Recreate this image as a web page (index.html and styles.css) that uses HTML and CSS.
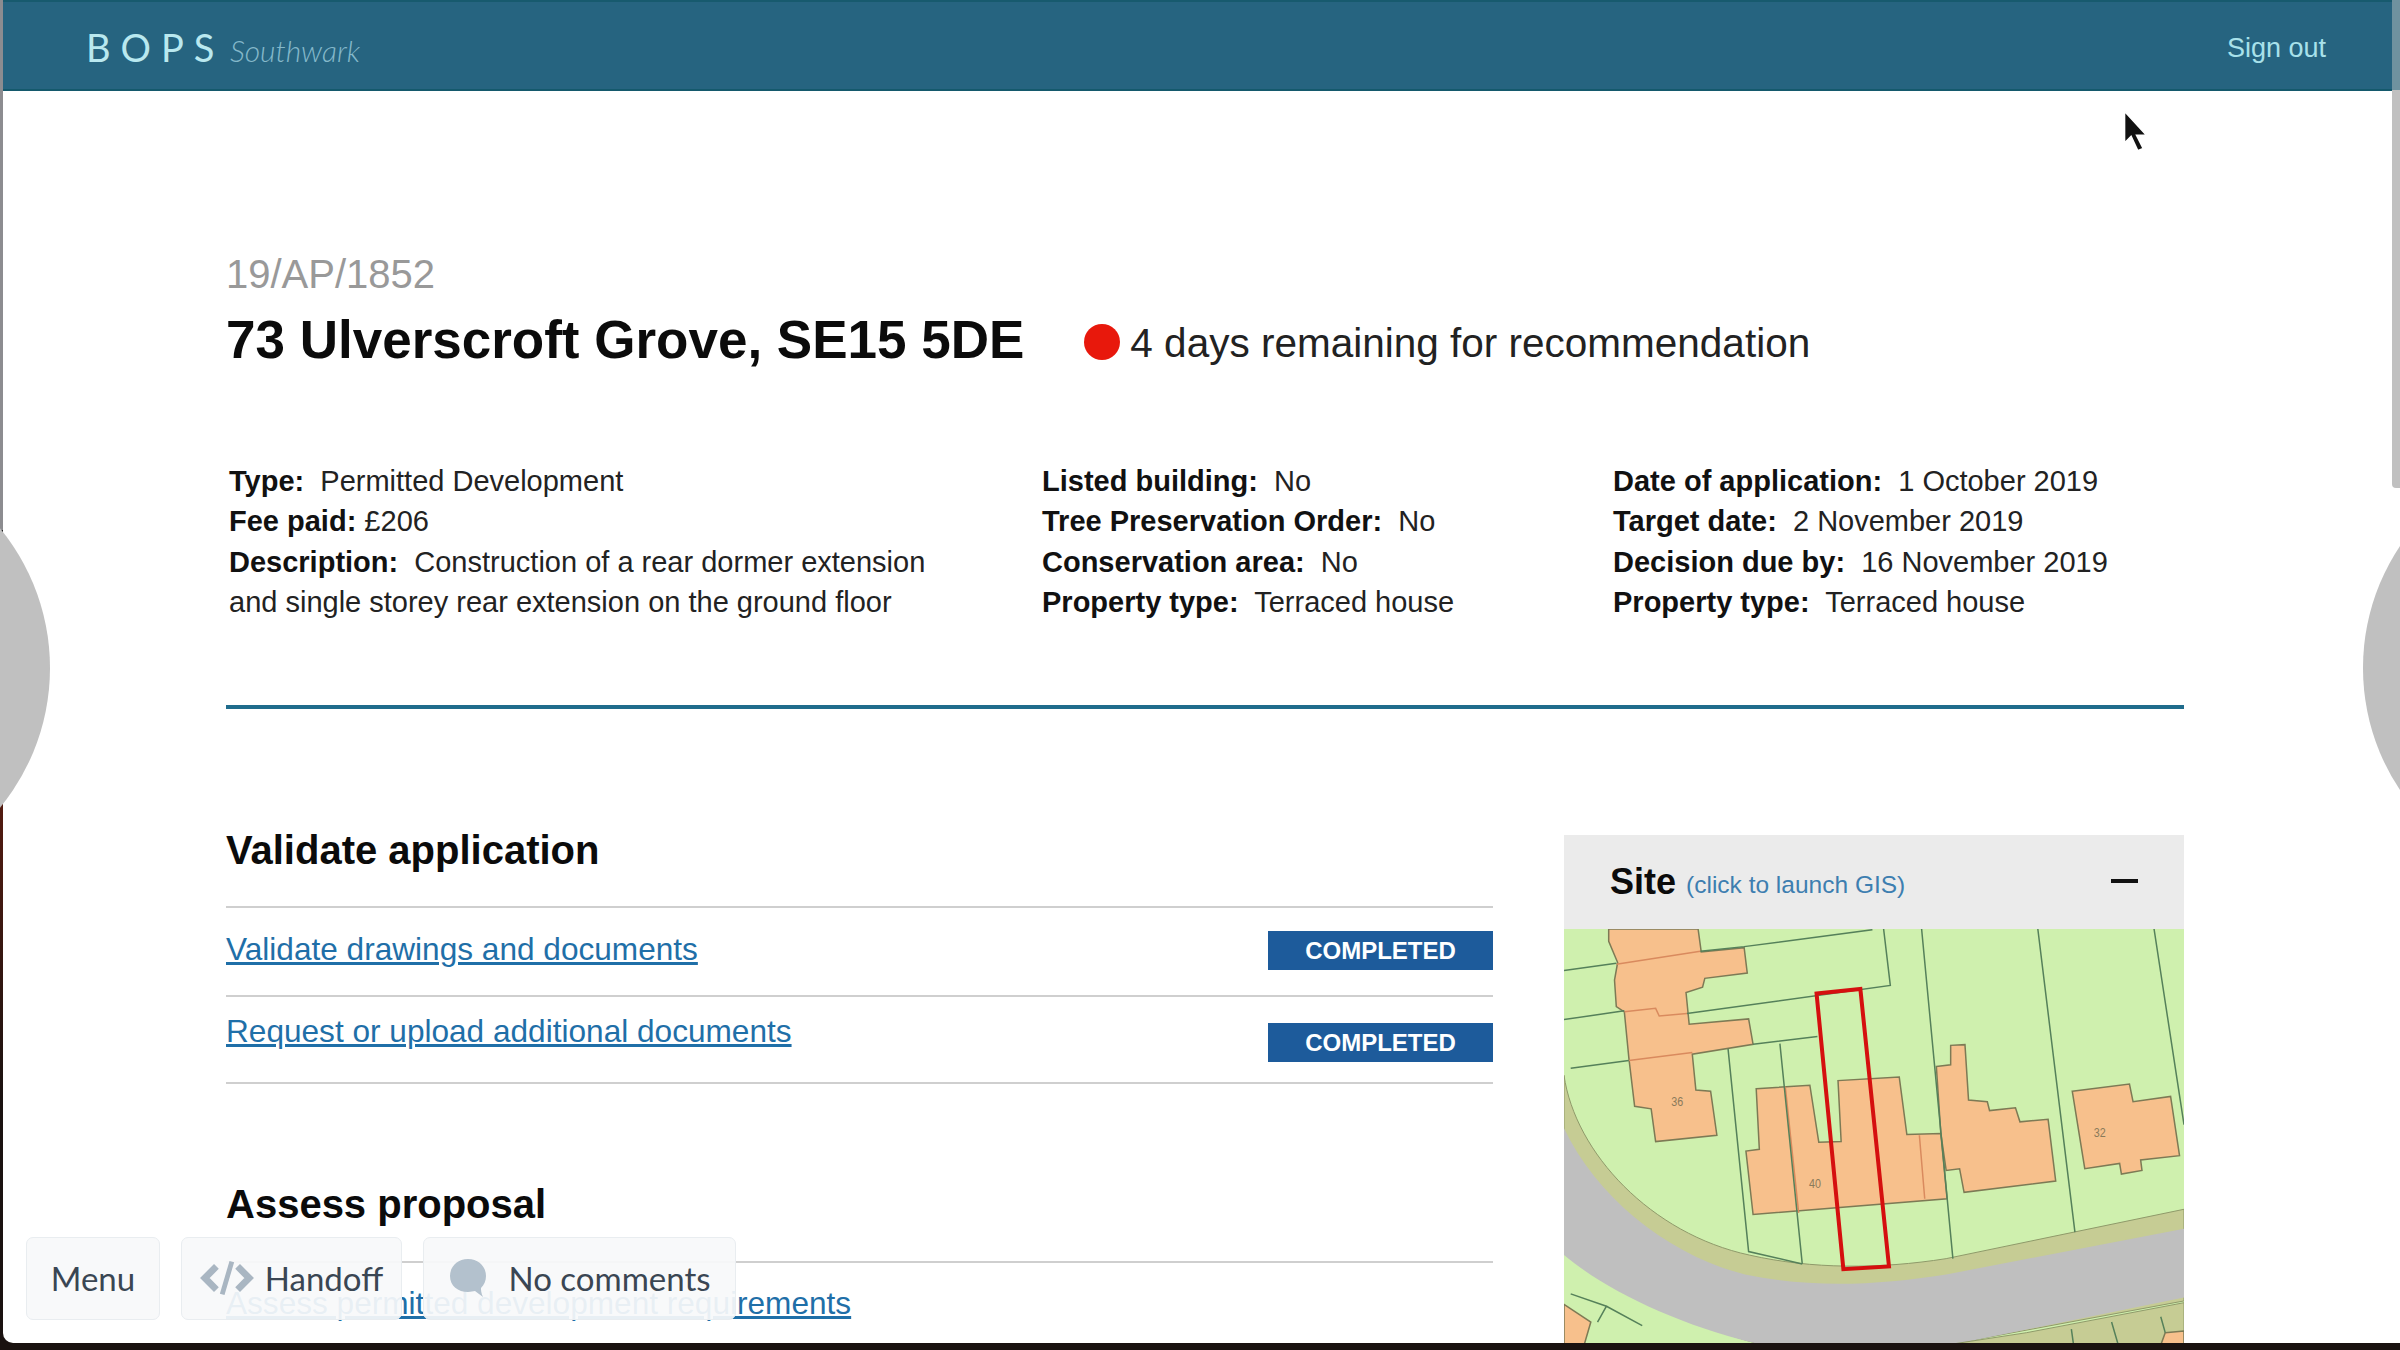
FILE: index.html
```html
<!DOCTYPE html>
<html lang="en">
<head>
  <meta charset="UTF-8" />
  <title>BOPS Southwark</title>
  <link rel="stylesheet" href="styles.css">
</head>
<body>
  <div class="screen">
    <div class="window">
      <header class="topbar">
        <div class="brand"><span class="brand-name">BOPS</span> <span class="brand-area">Southwark</span></div>
        <a class="signout">Sign out</a>
      </header>

      <main class="page">
        <p class="reference">19/AP/1852</p>
        <div class="title-row">
          <h1>73 Ulverscroft Grove, SE15 5DE</h1>
          <span class="dot"></span>
          <span class="remaining">4 days remaining for recommendation</span>
        </div>

        <div class="details">
          <div class="col-one">
            <div><b>Type:</b>&nbsp; Permitted Development</div>
            <div><b>Fee paid:</b> £206</div>
            <div><b>Description:</b>&nbsp; Construction of a rear dormer extension</div>
            <div>and single storey rear extension on the ground floor</div>
          </div>
          <div class="col-two">
            <div><b>Listed building:</b>&nbsp; No</div>
            <div><b>Tree Preservation Order:</b>&nbsp; No</div>
            <div><b>Conservation area:</b>&nbsp; No</div>
            <div><b>Property type:</b>&nbsp; Terraced house</div>
          </div>
          <div class="col-three">
            <div><b>Date of application:</b>&nbsp; 1 October 2019</div>
            <div><b>Target date:</b>&nbsp; 2 November 2019</div>
            <div><b>Decision due by:</b>&nbsp; 16 November 2019</div>
            <div><b>Property type:</b>&nbsp; Terraced house</div>
          </div>
        </div>

        <hr class="rule">

        <div class="columns">
          <div class="tasks">
            <h2>Validate application</h2>
            <ul class="task-list">
              <li class="task-first"><a>Validate drawings and documents</a><span class="badge">COMPLETED</span></li>
              <li class="task-second"><a>Request or upload additional documents</a><span class="badge">COMPLETED</span></li>
            </ul>
            <h2 class="second-heading">Assess proposal</h2>
            <ul class="task-list">
              <li class="task-last"><a>Assess permitted development requirements</a></li>
            </ul>
          </div>

          <aside class="site">
            <div class="site-head">
              <span class="site-title">Site</span>
              <a class="site-link">(click to launch GIS)</a>
              <span class="collapse"></span>
            </div>
            <div class="map">
              <svg viewBox="145 365 1387 1180" preserveAspectRatio="none">
                <rect x="145" y="365" width="1387" height="1180" fill="#cff0ae"/>
                <!-- road and pavements -->
                <path class="pave" d="M145 780C170 1000 340 1230 560 1290C700 1330 850 1330 1000 1300L1532 1160V1420L1000 1545H590C400 1480 240 1380 145 1265Z"/>
                <path class="road" d="M145 930C220 1130 380 1290 550 1345C700 1385 850 1375 1000 1345L1532 1215V1410L1010 1545H590C400 1490 240 1390 145 1290Z"/>
                <path class="pave" d="M1532 1425L1180 1510L1000 1545H1532Z"/>
                <!-- buildings -->
                <path class="house" d="M245 365H445L452 430L548 418L555 490L460 505L455 530L418 545L425 635L558 620L568 692L432 720L440 822L473 825L487 950L350 968L340 875L303 868L290 730L280 600L262 585L258 510L265 460L245 400Z"/>
                <path class="house" d="M575 818L695 808L715 970L765 968L758 795L895 785L912 948L988 945L1002 1130L568 1175L552 995L582 990Z"/>
                <path class="house" d="M978 755L1010 750L1010 695L1042 693L1050 850L1092 855L1097 880L1155 872L1165 912L1228 905L1245 1080L1040 1112L1030 1045L1000 1050L988 945Z"/>
                <path class="house" d="M1282 825L1410 805L1418 855L1502 840L1522 1008L1435 1020L1438 1050L1392 1060L1388 1030L1310 1045Z"/>
                <path class="house" d="M145 1430L205 1480L190 1545H145Z"/>
                <path class="house" d="M1490 1510L1532 1505V1545H1480Z"/>
                <!-- party walls inside the buildings -->
                <path class="wall" d="M262 465L450 428M280 600L350 590L358 612L420 605M290 738L432 715M640 812L670 1170M940 950L952 1130"/>
                <!-- plot boundaries -->
                <path class="plot" d="M145 483L262 462M450 428L548 415L835 367M860 365L875 525L420 605M145 622L280 597M160 760L290 738M568 692L712 670M512 705L558 1280L678 1315M628 690L678 1315M945 365L1015 1300M1205 365L1288 1225M1465 365L1532 920M160 1400L240 1435L220 1480M240 1435L320 1490M1280 1500L1285 1545M1370 1480L1385 1545M1480 1465L1490 1510"/>
                <text class="plot-no" transform="translate(385 868) scale(.8 1.2)">36</text>
                <text class="plot-no" transform="translate(693 1100) scale(.8 1.2)">40</text>
                <text class="plot-no" transform="translate(1330 955) scale(.8 1.2)">32</text>
                <!-- selected plot -->
                <path class="selected" d="M710 548L808 535L872 1322L770 1330Z"/>
              </svg>
            </div>
          </aside>
        </div>
      </main>
    </div>

    <div class="scrollbar"></div>
    <span class="nav-circle nav-left"></span>
    <span class="nav-circle nav-right"></span>

    <nav class="toolbar">
      <button class="tool tool-menu">Menu</button>
      <button class="tool tool-handoff">
        <svg viewBox="0 0 56 38" width="54" height="38"><path d="M17 7L5 19L17 31M39 7L51 19L39 31" fill="none" stroke="#a9b6c2" stroke-width="7"/><path d="M33 2L23 36" fill="none" stroke="#a9b6c2" stroke-width="5"/></svg>
        Handoff
      </button>
      <button class="tool tool-comments">
        <svg viewBox="0 0 40 42" width="40" height="42"><path d="M20 2C9 2 2 10 2 19C2 29 10 35 20 35C23 35 25 34 27 34L35 40C33 36 33 33 33 31C36 28 38 24 38 19C38 10 31 2 20 2Z" fill="#b3c1cd"/></svg>
        No comments
      </button>
    </nav>

    <svg class="cursor" viewBox="0 0 26 40" width="29" height="44"><path d="M3 1V30L9 24L15 37L20 35L14 23H23Z" fill="#111" stroke="#fff" stroke-width="1.5"/></svg>
  </div>
</body>
</html>
```

FILE: styles.css
```css
* {
  box-sizing: border-box;
}
html, body {
  margin: 0;
  height: 100%;
}
body {
  font-family: 'Liberation Sans', Arial, sans-serif;
  color: #111;
  background: #1a1210;
}
.screen {
  position: relative;
  width: 2400px;
  height: 1350px;
  overflow: hidden;
  padding: 0 8px 7px 3px;
  background: linear-gradient(to bottom, #8c8c90 0, #8c8c90 530px, #1c1c1c 530px, #1c1c1c 580px, #a8661f 580px, #a8661f 770px, #5a1c10 770px, #1a1210 1100px);
}
.screen::after {
  content: "";
  position: absolute;
  top: 0;
  right: 0;
  width: 8px;
  height: 90px;
  background: #6f929f;
}
.window {
  height: 100%;
  overflow: hidden;
  background: #fff;
  border-bottom-left-radius: 10px;
  margin-right: -8px;
}
.topbar {
  display: flex;
  justify-content: space-between;
  align-items: center;
  height: 91px;
  padding: 2px 66px 0 83px;
  margin-right: 8px;
  background: #266480;
  border-top: 2px solid #175a6e;
  border-bottom: 2px solid #14596c;
}
.brand-name {
  font-family: Lato, sans-serif;
  font-weight: 400;
  font-size: 38px;
  letter-spacing: 10px;
  color: #b9e8ef;
}
.brand-area {
  font-family: Lato, sans-serif;
  font-weight: 300;
  font-style: italic;
  font-size: 30px;
  color: #84b8ca;
  margin-left: 1px;
}
.signout {
  font-size: 27px;
  color: #a8e1ea;
  margin-top: 3px;
}
.page {
  padding: 160px 0 0 223px;
  width: 2181px;
}
.reference {
  margin: 0;
  font-size: 40px;
  line-height: 46px;
  color: #999;
}
.title-row {
  display: flex;
  align-items: center;
  margin-top: 11px;
  height: 62px;
}
h1 {
  margin: 0;
  font-size: 53px;
  font-weight: bold;
  color: #0b0b0b;
}
.dot {
  width: 36px;
  height: 36px;
  border-radius: 50%;
  background: #e8180c;
  margin: 6px 10px 0 60px;
}
.remaining {
  font-size: 40.5px;
  margin-top: 8px;
  color: #222;
}
.details {
  display: grid;
  grid-template-columns: 813px 571px 1fr;
  margin: 91px 0 0 3px;
  font-size: 29px;
  line-height: 40.3px;
  color: #222;
}
.details b {
  color: #111;
}
.rule {
  margin: 83px 0 0;
  height: 4px;
  border: 0;
  background: #1f6c8c;
}
.columns {
  display: flex;
  justify-content: space-between;
  align-items: flex-start;
  margin-top: 118px;
}
.tasks {
  width: 1267px;
}
h2 {
  margin: 0;
  height: 79px;
  font-size: 40px;
  line-height: 46px;
  font-weight: bold;
  color: #0b0b0b;
}
.second-heading {
  margin-top: 97px;
  height: 80px;
}
.task-list {
  list-style: none;
  margin: 0;
  padding: 0;
  border-top: 2px solid #cfcfcf;
}
.task-list li {
  display: flex;
  justify-content: space-between;
  font-size: 31.6px;
  border-bottom: 2px solid #cfcfcf;
}
.task-first {
  height: 89px;
  padding-top: 23px;
}
.task-second {
  height: 87px;
  padding-top: 16px;
}
.task-last {
  height: 60px;
  padding-top: 22px;
  border-bottom: 0 !important;
}
.task-list a {
  color: #1f6fa8;
  text-decoration: underline;
}
.badge {
  width: 225px;
  height: 39px;
  font-size: 24px;
  line-height: 40px;
  font-weight: bold;
  text-align: center;
  color: #fff;
  background: #1d5b9b;
}
.task-second .badge {
  margin-top: 10px;
}
.site {
  width: 620px;
  margin-top: 8px;
}
.site-head {
  display: flex;
  align-items: center;
  height: 94px;
  padding: 0 46px;
  background: #ebebeb;
}
.site-title {
  font-size: 36px;
  font-weight: bold;
  color: #0b0b0b;
}
.site-link {
  margin: 5px 0 0 10px;
  font-size: 24.5px;
  color: #3d7eb0;
}
.collapse {
  width: 27px;
  height: 4px;
  margin: -3px 0 0 auto;
  background: #111;
}
.map {
  height: 416px;
}
.map svg {
  display: block;
  width: 100%;
  height: 100%;
}
.map path {
  vector-effect: non-scaling-stroke;
}
.pave {
  fill: #c6cc94;
  stroke: #8f9a6a;
  stroke-width: 1;
}
.road {
  fill: #bfbfbf;
}
.house {
  fill: #f7c08c;
  stroke: #7d7a55;
  stroke-width: 1.5;
}
.wall {
  fill: none;
  stroke: #d98a5e;
  stroke-width: 1.5;
}
.plot {
  fill: none;
  stroke: #55805a;
  stroke-width: 1.5;
}
.plot-no {
  font-size: 30px;
  fill: #8a7a5a;
}
.selected {
  fill: none;
  stroke: #d50f0f;
  stroke-width: 4;
}
.scrollbar {
  position: absolute;
  top: 90px;
  right: 0;
  width: 8px;
  height: 398px;
  background: #c0c0c0;
  border-bottom-left-radius: 4px;
}
.nav-circle {
  position: absolute;
  top: 448px;
  width: 440px;
  height: 440px;
  border-radius: 50%;
  background: #c0c0c0;
}
.nav-left {
  left: -390px;
}
.nav-right {
  right: -403px;
}
.toolbar {
  position: absolute;
  left: 26px;
  top: 1237px;
  display: flex;
  gap: 21px;
}
.tool {
  display: flex;
  align-items: center;
  justify-content: center;
  gap: 11px;
  height: 83px;
  padding: 0 0 2px;
  font-family: Lato, sans-serif;
  font-size: 33px;
  color: #3a4653;
  background: rgba(247, 249, 250, 0.93);
  border: 1px solid #e9edf0;
  border-radius: 7px;
}
.tool-menu {
  width: 134px;
}
.tool-handoff {
  width: 221px;
}
.tool-comments {
  width: 313px;
  gap: 20px;
}
.cursor {
  position: absolute;
  left: 2121px;
  top: 110px;
}
```
